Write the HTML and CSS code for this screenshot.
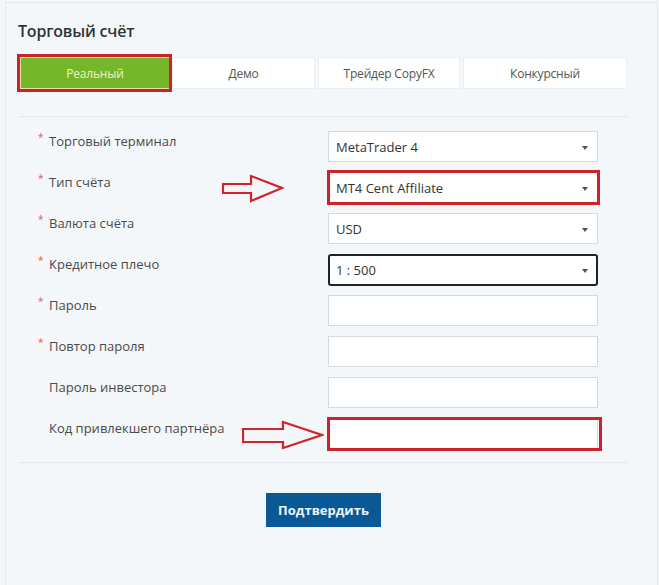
FILE: index.html
```html
<!DOCTYPE html>
<html lang="ru">
<head>
<meta charset="utf-8">
<title>Торговый счёт</title>
<link rel="stylesheet" href="styles.css">
</head>
<body>
<div class="panel">
  <h1 class="title">Торговый счёт</h1>
  <div class="tabs">
    <div class="tab tab-active">Реальный<span class="mark mark-tab"></span></div>
    <div class="tab tab-demo">Демо</div>
    <div class="tab tab-copy">Трейдер CopyFX</div>
    <div class="tab tab-contest">Конкурсный</div>
  </div>
  <div class="sep"></div>
  <div class="form">
    <div class="row">
      <div class="label"><span class="star">*</span>Торговый терминал</div>
      <div class="field select">MetaTrader 4<span class="caret"></span></div>
    </div>
    <div class="row">
      <div class="label"><span class="star">*</span>Тип счёта</div>
      <div class="field select">MT4 Cent Affiliate<span class="caret"></span><span class="mark mark-field"></span>
        <svg class="arrow arrow-1" width="62" height="30" viewBox="0 0 62 30"><path d="M1 10 H29 V2 L60 14 L29 27 V19 H1 Z" fill="none" stroke="#d0232b" stroke-width="2.2" stroke-linejoin="miter"/></svg>
      </div>
    </div>
    <div class="row">
      <div class="label"><span class="star">*</span>Валюта счёта</div>
      <div class="field select">USD<span class="caret"></span></div>
    </div>
    <div class="row">
      <div class="label"><span class="star">*</span>Кредитное плечо</div>
      <div class="field select focus">1 : 500<span class="caret"></span></div>
    </div>
    <div class="row">
      <div class="label"><span class="star">*</span>Пароль</div>
      <div class="field"></div>
    </div>
    <div class="row">
      <div class="label"><span class="star">*</span>Повтор пароля</div>
      <div class="field"></div>
    </div>
    <div class="row">
      <div class="label"><span class="star"></span>Пароль инвестора</div>
      <div class="field"></div>
    </div>
    <div class="row">
      <div class="label"><span class="star"></span>Код привлекшего партнёра</div>
      <div class="field"><span class="mark mark-last"></span>
        <svg class="arrow arrow-2" width="82" height="30" viewBox="0 0 82 30"><path d="M1 9 H41 V2 L80 15 L41 28 V22 H1 Z" fill="none" stroke="#d0232b" stroke-width="2.2" stroke-linejoin="miter"/></svg>
      </div>
    </div>
  </div>
  <div class="sep sep-bottom"></div>
  <div class="actions"><button class="btn" type="button">Подтвердить</button></div>
</div>
</body>
</html>
```
FILE: styles.css
```css
* { box-sizing: border-box; }
html, body { margin: 0; padding: 0; }
body {
  background: #f4f7fa;
  font-family: "Open Sans", "Noto Sans", sans-serif;
  color: #444;
  width: 659px;
  height: 585px;
  overflow: hidden;
}
.panel {
  margin: 2px 0 0 5px;
  width: 653px;
  height: 600px;
  border: 1px solid #e3e8ed;
  border-bottom: none;
  padding: 18px 0 0 12px;
}
.title {
  margin: 0;
  font-size: 16px;
  line-height: 20px;
  font-weight: 600;
  color: #333;
  letter-spacing: -0.2px;
}
.tabs {
  display: flex;
  margin: 16px 0 0 2px;
  height: 32px;
}
.tab {
  position: relative;
  height: 32px;
  background: #fff;
  border: 1px solid #eaeef1;
  display: flex;
  align-items: center;
  justify-content: center;
  font-size: 12px;
  color: #555;
  letter-spacing: -0.2px;
}
.tab-active {
  width: 150px;
  background: #76b62b;
  color: #e9f6c6;
  border: 1px solid #e9e3a8;
}
.tab-demo { width: 143px; margin-left: 2px; }
.tab-copy { width: 142px; margin-left: 3px; }
.tab-contest { width: 164px; margin-left: 3px; }
.mark {
  position: absolute;
  border: 3px solid #cc2229;
  pointer-events: none;
}
.mark-tab { inset: -4px -3px -4px -4px; }
.sep {
  width: 610px;
  height: 2px;
  margin-top: 27px;
  background: #e6eaee;
  border-bottom: 1px solid #f0f3f6;
}
.form {
  padding: 13px 0 0 20px;
  display: flex;
  flex-direction: column;
  gap: 10px;
}
.row {
  display: flex;
  align-items: flex-start;
  height: 31px;
}
.label {
  width: 290px;
  font-size: 13px;
  line-height: 20px;
  color: #4a4a4a;
  display: flex;
}
.star {
  width: 11px;
  color: #e05a5a;
  font-size: 10px;
  line-height: 12px;
}
.field {
  position: relative;
  width: 270px;
  height: 31px;
  background: #fff;
  border: 1px solid #d5dadf;
  font-size: 13px;
  color: #333;
  padding-left: 7px;
  display: flex;
  align-items: center;
}
.field.focus {
  border: 2px solid #222;
  border-radius: 3px;
  padding-left: 6px;
  height: 32px;
}
.caret {
  position: absolute;
  right: 9px;
  top: 14px;
  width: 0;
  height: 0;
  border-left: 3.5px solid transparent;
  border-right: 3.5px solid transparent;
  border-top: 4px solid #3d5866;
}
.focus .caret { right: 8px; top: 13px; }
.mark-field { inset: -3px -3px -3px -2px; }
.mark-last { inset: -2px -5px -3px -2px; }
.arrow { position: absolute; }
.arrow-1 { left: -107px; top: 1px; }
.arrow-2 { left: -87px; top: 1px; }
.sep-bottom { margin-top: 13px; }
.actions {
  display: flex;
  padding: 29px 0 0 248px;
}
.btn {
  width: 115px;
  height: 34px;
  background: #0b5896;
  border: none;
  color: #eaf3fb;
  font-family: "Open Sans", "Noto Sans", sans-serif;
  font-weight: 700;
  font-size: 13px;
  padding: 0;
}
```
